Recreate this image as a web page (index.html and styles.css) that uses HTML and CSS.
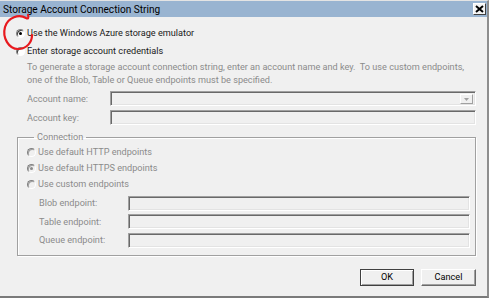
FILE: index.html
```html
<!DOCTYPE html>
<html>
<head>
<meta charset="utf-8">
<link rel="stylesheet" href="styles.css">
</head>
<body>
<div class="dialog">
  <div class="titlebar">
    <span class="title">Storage Account Connection String</span>
    <span class="close">
      <svg width="9" height="8" viewBox="0 0 9 8"><path d="M1 1 L8 7 M8 1 L1 7" stroke="#000" stroke-width="2"/></svg>
    </span>
  </div>

  <div class="content">
    <div class="option"><span class="radio checked"></span>Use the Windows Azure storage emulator</div>
    <div class="option"><span class="radio"></span>Enter storage account credentials</div>

    <div class="creds">
      <p class="hint">To generate a storage account connection string, enter an account name and key.&nbsp; To use custom endpoints,<br>one of the Blob, Table or Queue endpoints must be specified.</p>
      <div class="field">
        <span class="label">Account name:</span>
        <div class="box combo"><span class="drop"><svg width="5" height="3" viewBox="0 0 5 3"><path d="M0 0 H5 L2.5 3 Z" fill="#a0a0a0"/></svg></span></div>
      </div>
      <div class="field">
        <span class="label">Account key:</span>
        <div class="box"></div>
      </div>
    </div>

    <fieldset class="group">
      <legend>Connection</legend>
      <div class="option off"><span class="radio"></span>Use default HTTP endpoints</div>
      <div class="option off"><span class="radio checked"></span>Use default HTTPS endpoints</div>
      <div class="option off"><span class="radio"></span>Use custom endpoints</div>
      <div class="endpoints">
        <div class="field"><span class="label">Blob endpoint:</span><div class="box"></div></div>
        <div class="field"><span class="label">Table endpoint:</span><div class="box"></div></div>
        <div class="field"><span class="label">Queue endpoint:</span><div class="box"></div></div>
      </div>
    </fieldset>

    <div class="actions">
      <button class="btn default">OK</button>
      <button class="btn">Cancel</button>
    </div>
  </div>

  <svg class="mark" width="40" height="56" viewBox="0 0 40 56">
    <path d="M28 14 C29 17 28 18 26 17 C19 13 8 16 5 26 C2 37 9 48 18 48 C27 48 32 41 32 34" fill="none" stroke="#e8191e" stroke-width="2.2" stroke-linecap="round"/>
  </svg>
</div>
</body>
</html>
```

FILE: styles.css
```css
* {
  box-sizing: border-box;
}
body {
  margin: 0;
  background: #fff;
  font-family: Roboto, "Noto Sans", sans-serif;
  font-size: 9.15px;
  color: #1a1a1a;
}
.dialog {
  position: relative;
  width: 489px;
  height: 298px;
  background: #f0f0f0;
  border-top: 1px solid #e4e4e4;
  border-right: 2px solid #8e8e8e;
  border-bottom: 2px solid #7a7a7a;
}
.titlebar {
  height: 16px;
  background: #99b4d1;
  display: flex;
  align-items: center;
  justify-content: space-between;
  padding: 0 1px 0 3px;
}
.title {
  font-size: 10.1px;
  color: #000;
}
.close {
  width: 13px;
  height: 12px;
  background: #f4f4f4;
  border: 1px solid;
  border-color: #fff #404040 #404040 #fff;
  display: flex;
  align-items: center;
  justify-content: center;
}
.content {
  padding: 7px 11px 0 16px;
}
.option {
  height: 18px;
  display: flex;
  align-items: center;
  gap: 2px;
}
.radio {
  width: 9px;
  height: 9px;
  border-radius: 50%;
  background: #fff;
  border: 1px solid;
  border-color: #808080 #fff #fff #808080;
  box-shadow: inset 1px 1px 0 #404040;
  display: flex;
  align-items: center;
  justify-content: center;
}
.radio.checked::after {
  content: "";
  width: 3px;
  height: 3px;
  border-radius: 50%;
  background: #000;
}
.off {
  height: 16px;
  color: #8b8b8b;
}
.off .radio {
  background: #f0f0f0;
  box-shadow: inset 1px 1px 0 #a0a0a0;
}
.off .radio.checked::after {
  background: #8b8b8b;
}
.creds {
  padding-left: 11px;
  color: #8b8b8b;
}
.hint {
  margin: 1px 0 0;
  line-height: 13px;
  white-space: nowrap;
}
.field {
  display: flex;
  align-items: center;
  height: 15px;
  margin-top: 4px;
}
.label {
  width: 83px;
  flex: none;
}
.box {
  flex: 1;
  height: 15px;
  border: 1px solid;
  border-color: #a0a0a0 #fff #fff #a0a0a0;
  box-shadow: inset 1px 1px 0 #696969, inset -1px -1px 0 #e3e3e3;
  background: #f0f0f0;
}
.combo {
  display: flex;
  justify-content: flex-end;
  padding: 2px;
}
.drop {
  width: 13px;
  height: 10px;
  background: #f0f0f0;
  border: 1px solid;
  border-color: #fff #a0a0a0 #a0a0a0 #fff;
  display: flex;
  align-items: center;
  justify-content: center;
}
.group {
  margin: 6px 0 0 1px;
  padding: 0 5px 7px 9px;
  width: 459px;
  border: 1px solid #a0a0a0;
  box-shadow: inset 1px 1px 0 #fff, 1px 1px 0 #fff;
  color: #8b8b8b;
}
.group legend {
  padding: 0 3px;
  margin-left: 7px;
  line-height: 13px;
}
.endpoints {
  padding-left: 12px;
  margin-top: 1px;
}
.endpoints .field {
  margin-top: 3.5px;
}
.endpoints .label {
  width: 89px;
}
.actions {
  display: flex;
  justify-content: flex-end;
  gap: 7px;
  margin-top: 13px;
  padding-right: 0;
}
.btn {
  width: 55px;
  height: 17px;
  font: inherit;
  color: #000;
  background: #f0f0f0;
  border: 1px solid;
  border-color: #fff #696969 #696969 #fff;
  box-shadow: inset -1px -1px 0 #a0a0a0;
  padding: 0;
}
.btn.default {
  width: 54px;
  border-color: #404040;
  box-shadow: inset 1px 1px 0 #fff, inset -1px -1px 0 #a0a0a0;
}
.mark {
  position: absolute;
  left: 0;
  top: 0;
}
```
